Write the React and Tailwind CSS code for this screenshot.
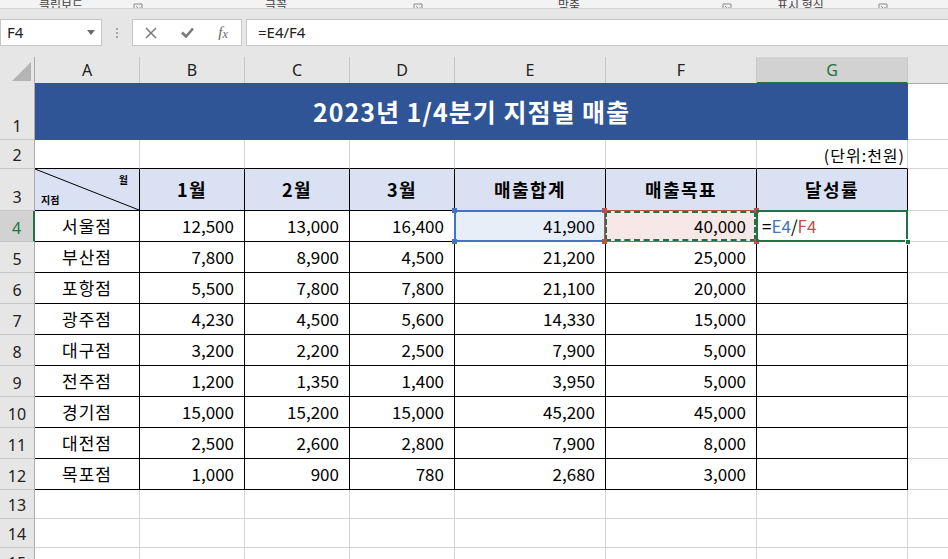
import React from "react";

const data = [
  ["서울점", "12,500", "13,000", "16,400", "41,900", "40,000"],
  ["부산점", "7,800", "8,900", "4,500", "21,200", "25,000"],
  ["포항점", "5,500", "7,800", "7,800", "21,100", "20,000"],
  ["광주점", "4,230", "4,500", "5,600", "14,330", "15,000"],
  ["대구점", "3,200", "2,200", "2,500", "7,900", "5,000"],
  ["전주점", "1,200", "1,350", "1,400", "3,950", "5,000"],
  ["경기점", "15,000", "15,200", "15,000", "45,200", "45,000"],
  ["대전점", "2,500", "2,600", "2,800", "7,900", "8,000"],
  ["목포점", "1,000", "900", "780", "2,680", "3,000"],
];

const GRID = "grid grid-cols-[35px_105px_105px_105px_105px_151px_151px_151px_1fr]";
const KR = "font-['Noto_Sans_CJK_KR',sans-serif]";

function Launcher() {
  return (
    <svg width="10" height="10" viewBox="0 0 10 10" className="shrink-0">
      <path d="M1 1h8v8H1z" fill="none" stroke="#8a8a8a" strokeWidth="1" />
      <path d="M3 3l4 4M7 4v3H4" fill="none" stroke="#8a8a8a" strokeWidth="1" />
    </svg>
  );
}

function Ribbon() {
  return (
    <div className={`h-[9px] bg-[#f3f3f3] border-b border-[#d5d5d5] overflow-hidden flex items-end text-[12px] leading-[12px] text-[#444] ${KR}`}>
      <span className="ml-[39px] w-[48px] shrink-0 whitespace-nowrap mb-[-3px]">클립보드</span>
      <span className="ml-[46px] mb-[-5px]"><Launcher /></span>
      <span className="ml-[122px] w-[24px] shrink-0 whitespace-nowrap mb-[-3px]">글꼴</span>
      <span className="ml-[124px] mb-[-5px]"><Launcher /></span>
      <span className="ml-[135px] w-[24px] shrink-0 whitespace-nowrap mb-[-3px]">맞춤</span>
      <span className="ml-[140px] mb-[-5px]"><Launcher /></span>
      <span className="ml-[45px] w-[54px] shrink-0 whitespace-nowrap mb-[-3px]">표시 형식</span>
      <span className="ml-[47px] mb-[-5px]"><Launcher /></span>
    </div>
  );
}

function FormulaBar() {
  return (
    <div className="h-[48px] bg-[#e6e6e6] pt-[10px] flex overflow-hidden">
      <div className="w-[102px] h-[27px] shrink-0 bg-white border border-[#c6c6c6] flex items-center pl-[6px] pr-[6px] text-[15px] text-[#222] font-['Noto_Sans',sans-serif]">
        <span className="flex-1">F4</span>
        <svg width="8" height="5" viewBox="0 0 8 5"><path d="M0 0h8L4 5z" fill="#6b6b6b" /></svg>
      </div>
      <div className="w-[30px] h-[27px] shrink-0 flex flex-col items-center justify-center gap-[2px]">
        <span className="w-[2px] h-[2px] bg-[#a6a6a6]" />
        <span className="w-[2px] h-[2px] bg-[#a6a6a6]" />
        <span className="w-[2px] h-[2px] bg-[#a6a6a6]" />
      </div>
      <div className="w-[110px] h-[27px] shrink-0 bg-white border border-[#c6c6c6] flex items-center">
        <div className="w-[36px] flex justify-center">
          <svg width="12" height="12" viewBox="0 0 12 12"><path d="M1 1l10 10M11 1L1 11" stroke="#7a7a7a" strokeWidth="1.5" /></svg>
        </div>
        <div className="w-[36px] flex justify-center">
          <svg width="13" height="11" viewBox="0 0 13 11"><path d="M1 5.5l4 4L12 1.5" fill="none" stroke="#7a7a7a" strokeWidth="2.6" /></svg>
        </div>
        <div className="w-[36px] flex justify-center font-['Liberation_Serif',serif] italic text-[15px] text-[#666] leading-none">
          <span>f</span><span className="text-[12px] mt-[3px]">x</span>
        </div>
      </div>
      <div className="ml-[4px] mr-[-4px] flex-1 h-[27px] bg-white border border-[#c6c6c6] flex items-center pl-[11px] text-[15px] text-[#222] font-['Noto_Sans',sans-serif]">
        =E4/F4
      </div>
    </div>
  );
}

function ColumnHeaders() {
  const letters = ["A", "B", "C", "D", "E", "F"];
  return (
    <div className={`${GRID} h-[26px] bg-[#e6e6e6] text-[16px] text-[#222] font-['Noto_Sans',sans-serif]`}>
      <div className="border-r border-[#ababab] border-b flex items-end justify-end pr-[3px] pb-[2px]">
        <svg width="19" height="19" viewBox="0 0 19 19"><path d="M19 0V19H0z" fill="#b4b4b4" /></svg>
      </div>
      {letters.map((l) => (
        <div key={l} className="border-r border-r-[#c6c6c6] border-b border-b-[#ababab] flex items-center justify-center">
          {l}
        </div>
      ))}
      <div className="border-r border-r-[#c6c6c6] border-b-2 border-b-[#217346] bg-[#d2d2d2] text-[#217346] flex items-center justify-center pt-[1px]">
        G
      </div>
      <div className="border-b border-b-[#ababab]" />
    </div>
  );
}

function RowHead({ n, sel }) {
  return sel ? (
    <div className="bg-[#d2d2d2] border-r-2 border-r-[#217346] border-b border-b-[#c6c6c6] flex items-end justify-center pb-[3px] text-[16px] text-[#217346] font-['Noto_Sans',sans-serif] leading-[20px]">
      {n}
    </div>
  ) : (
    <div className="bg-[#e6e6e6] border-r border-r-[#ababab] border-b border-b-[#c6c6c6] flex items-end justify-center pb-[3px] text-[16px] text-[#222] font-['Noto_Sans',sans-serif] leading-[20px]">
      {n}
    </div>
  );
}

function DataRow({ n, r, first }) {
  return (
    <div className={`${GRID} h-[31px] text-[17px] text-black ${KR}`}>
      <RowHead n={n} sel={first} />
      <div className="border-r border-b border-black flex items-center justify-center tracking-[1px]">{r[0]}</div>
      {r.slice(1, 4).map((v, i) => (
        <div key={i} className="border-r border-b border-black flex items-center justify-end pr-[10px]">{v}</div>
      ))}
      {first ? (
        <div className="relative border-r border-b border-black flex items-center justify-end pr-[10px] bg-[#e8eef8]">
          <div className="absolute left-[-1px] top-[-1px] right-[-1px] bottom-[-1px] border-2 border-[#4472c4]" />
          <span className="relative">{r[4]}</span>
          <span className="absolute left-[-3px] top-[-3px] w-[5px] h-[5px] bg-[#4472c4]" />
          <span className="absolute left-[-3px] bottom-[-3px] w-[5px] h-[5px] bg-[#4472c4]" />
        </div>
      ) : (
        <div className="border-r border-b border-black flex items-center justify-end pr-[10px]">{r[4]}</div>
      )}
      {first ? (
        <div className="relative border-r border-b border-black flex items-center justify-end pr-[10px] bg-[#f8e7e7]">
          <div className="absolute left-[-2px] top-[-1px] right-[-1px] bottom-[-1px] border border-[#c0504d]" />
          <div className="absolute left-[-1px] top-0 right-0 bottom-0 border-2 border-dashed border-[#217346]" />
          <span className="relative">{r[5]}</span>
          <span className="absolute left-[-4px] top-[-3px] w-[5px] h-[5px] bg-[#c0504d]" />
          <span className="absolute left-[-4px] bottom-[-3px] w-[5px] h-[5px] bg-[#c0504d]" />
          <span className="absolute right-[-3px] top-[-3px] w-[5px] h-[5px] bg-[#c0504d]" />
          <span className="absolute right-[-3px] bottom-[-3px] w-[5px] h-[5px] bg-[#c0504d]" />
        </div>
      ) : (
        <div className="border-r border-b border-black flex items-center justify-end pr-[10px]">{r[5]}</div>
      )}
      {first ? (
        <div className="relative border-r border-b border-black flex items-center pl-[5px]">
          <div className="absolute left-[-1px] top-[-1px] right-[-1px] bottom-[-1px] border-2 border-[#217346]" />
          <span className="relative">
            <span>=</span>
            <span className="text-[#4472c4]">E4</span>
            <span>/</span>
            <span className="text-[#c0504d]">F4</span>
          </span>
          <span className="absolute right-[-4px] bottom-[-4px] w-[6px] h-[6px] bg-[#217346] border border-white" />
        </div>
      ) : (
        <div className="border-r border-b border-black" />
      )}
      <div className="border-b border-[#d4d4d4]" />
    </div>
  );
}

function EmptyRow({ n }) {
  const cells = [0, 1, 2, 3, 4, 5, 6];
  return (
    <div className={`${GRID} h-[29px]`}>
      <RowHead n={n} />
      {cells.map((c) => (
        <div key={c} className="border-r border-b border-[#d4d4d4]" />
      ))}
      <div className="border-b border-[#d4d4d4]" />
    </div>
  );
}

export default function App() {
  const heads = ["1월", "2월", "3월", "매출합계", "매출목표", "달성률"];
  return (
    <div className="w-[948px] h-[559px] overflow-hidden bg-white">
      <Ribbon />
      <FormulaBar />
      <ColumnHeaders />

      {/* Row 1 */}
      <div className={`${GRID} h-[57px]`}>
        <RowHead n={1} />
        <div className={`col-span-7 bg-[#2f5597] flex items-center justify-center text-white font-bold text-[25px] tracking-[1px] ${KR}`}>
          2023년 1/4분기 지점별 매출
        </div>
        <div className="border-b border-[#d4d4d4]" />
      </div>

      {/* Row 2 */}
      <div className={`${GRID} h-[29px] ${KR}`}>
        <RowHead n={2} />
        {[0, 1, 2, 3, 4].map((c) => (
          <div key={c} className="border-r border-r-[#d4d4d4] border-b border-b-black" />
        ))}
        <div className="border-r border-r-[#d4d4d4] border-b border-b-black" />
        <div className="border-r border-r-[#d4d4d4] border-b border-b-black flex items-end justify-end pr-[2px] pb-[1px] text-[16px] tracking-[1px] text-black">
          (단위:천원)
        </div>
        <div className="border-b border-[#d4d4d4]" />
      </div>

      {/* Row 3 */}
      <div className={`${GRID} h-[42px] ${KR}`}>
        <RowHead n={3} />
        <div className="relative border-r border-b border-black bg-[#d9e1f2] flex flex-col justify-between pt-[4px] pb-[3px] pl-[6px] pr-[11px] text-[10px] font-bold leading-[14px]">
          <svg className="absolute inset-0 w-full h-full" preserveAspectRatio="none" viewBox="0 0 100 100">
            <line x1="0" y1="0" x2="100" y2="100" stroke="black" strokeWidth="1" vectorEffect="non-scaling-stroke" />
          </svg>
          <span className="self-end relative">월</span>
          <span className="self-start relative">지점</span>
        </div>
        {heads.map((h) => (
          <div key={h} className="border-r border-b border-black bg-[#d9e1f2] flex items-center justify-center font-bold text-[18px] tracking-[1.5px]">
            {h}
          </div>
        ))}
        <div className="border-b border-[#d4d4d4]" />
      </div>

      {data.map((r, i) => (
        <DataRow key={i} n={i + 4} r={r} first={i === 0} />
      ))}

      <EmptyRow n={13} />
      <EmptyRow n={14} />
      <EmptyRow n={15} />
    </div>
  );
}
